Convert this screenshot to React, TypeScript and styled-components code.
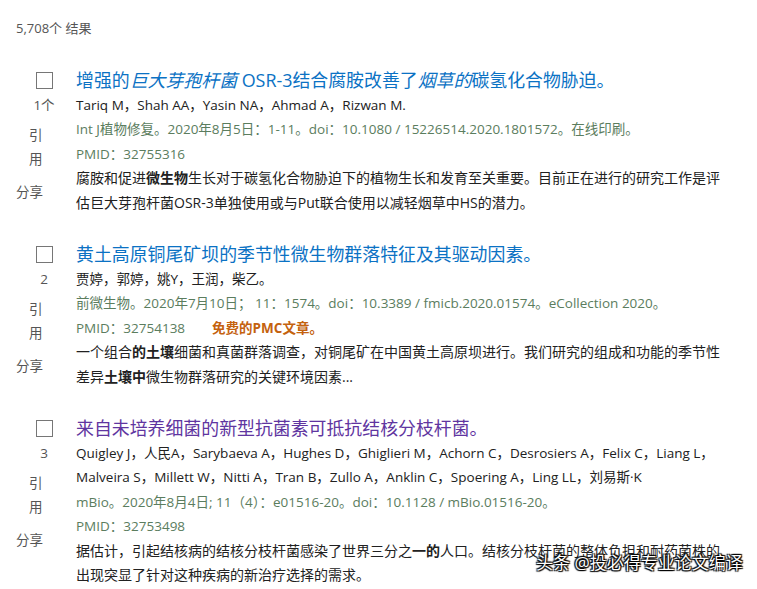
import React from "react";
import styled, { createGlobalStyle } from "styled-components";

const Global = createGlobalStyle`
  html, body { margin: 0; padding: 0; background: #fff; }
  body { font-family: "Segoe UI", "Open Sans", "Noto Sans CJK SC", sans-serif; color: #212121; }
`;

const Page = styled.div`
  position: relative;
  width: 757px;
  height: 589px;
  overflow: hidden;
  padding: 18px 0 0 16px;
  box-sizing: border-box;
`;

const Count = styled.div`
  font-size: 13px;
  line-height: 20px;
  color: #555;
`;

const List = styled.div`
  margin-top: 30px;
  display: flex;
  flex-direction: column;
  gap: 27px;
`;

const Item = styled.div`
  display: flex;
  align-items: flex-start;
`;

const Side = styled.div`
  width: 56px;
  margin-right: 4px;
  display: flex;
  flex-direction: column;
  align-items: center;
  color: #555;
  font-size: 13.5px;
`;

const Box = styled.div`
  width: 15px;
  height: 15px;
  border: 1.5px solid #767676;
  margin-top: 4px;
`;

const Cites = styled.div`
  margin-top: 4px;
  line-height: 24px;
`;

const CiteBtn = styled.div`
  align-self: flex-start;
  margin: 6px 0 0 13px;
  width: 14px;
  line-height: 24px;
  word-break: break-all;
`;

const ShareBtn = styled.div`
  align-self: flex-start;
  margin-top: 9px;
  line-height: 24px;
`;

const Body = styled.div`
  display: flex;
  flex-direction: column;
  white-space: nowrap;
`;

const Title = styled.a<{ $visited?: boolean }>`
  font-size: 17.9px;
  line-height: 25px;
  color: ${(p) => (p.$visited ? "#6035a0" : "#0b72c4")};
  text-decoration: none;
  i { font-style: italic; }
`;

const Line = styled.div<{ $tone?: "meta" | "text" | "author" }>`
  font-size: ${(p) => (p.$tone === "text" ? "14px" : "13.5px")};
  line-height: 24.4px;
  color: ${(p) => (p.$tone === "meta" ? "#5b7d5e" : "#212121")};
  b { font-weight: 700; }
`;

const Free = styled.span`
  margin-left: 27px;
  color: #c4620f;
  font-weight: 700;
`;

const Watermark = styled.div`
  position: absolute;
  left: 536px;
  top: 551px;
  font-size: 17px;
  line-height: 24px;
  color: #fff;
  white-space: nowrap;
  text-shadow: 0 0 1px #000, 1px 1px 1px #000, -1px -1px 1px #000, 1px -1px 1px #000, -1px 1px 1px #000;
`;

type Entry = {
  n: string;
  title: React.ReactNode;
  visited?: boolean;
  authors: string[];
  meta: string;
  pmid: string;
  free?: boolean;
  text: React.ReactNode[];
};

const entries: Entry[] = [
  {
    n: "1个",
    title: (
      <>
        增强的<i>巨大芽孢杆菌</i> OSR-3结合腐胺改善了<i>烟草的</i>碳氢化合物胁迫。
      </>
    ),
    authors: ["Tariq M，Shah AA，Yasin NA，Ahmad A，Rizwan M."],
    meta: "Int J植物修复。2020年8月5日：1-11。doi：10.1080 / 15226514.2020.1801572。在线印刷。",
    pmid: "PMID：32755316",
    text: [
      <>
        腐胺和促进<b>微生物</b>生长对于碳氢化合物胁迫下的植物生长和发育至关重要。目前正在进行的研究工作是评
      </>,
      <>估巨大芽孢杆菌OSR-3单独使用或与Put联合使用以减轻烟草中HS的潜力。</>,
    ],
  },
  {
    n: "2",
    title: <>黄土高原铜尾矿坝的季节性微生物群落特征及其驱动因素。</>,
    authors: ["贾婷，郭婷，姚Y，王润，柴乙。"],
    meta: "前微生物。2020年7月10日； 11：1574。doi：10.3389 / fmicb.2020.01574。eCollection 2020。",
    pmid: "PMID：32754138",
    free: true,
    text: [
      <>
        一个组合<b>的土壤</b>细菌和真菌群落调查，对铜尾矿在中国黄土高原坝进行。我们研究的组成和功能的季节性
      </>,
      <>
        差异<b>土壤中</b>微生物群落研究的关键环境因素...
      </>,
    ],
  },
  {
    n: "3",
    visited: true,
    title: <>来自未培养细菌的新型抗菌素可抵抗结核分枝杆菌。</>,
    authors: [
      "Quigley J，人民A，Sarybaeva A，Hughes D，Ghiglieri M，Achorn C，Desrosiers A，Felix C，Liang L，",
      "Malveira S，Millett W，Nitti A，Tran B，Zullo A，Anklin C，Spoering A，Ling LL，刘易斯·K",
    ],
    meta: "mBio。2020年8月4日; 11（4）：e01516-20。doi：10.1128 / mBio.01516-20。",
    pmid: "PMID：32753498",
    text: [
      <>
        据估计，引起结核病的结核分枝杆菌感染了世界三分之<b>一的</b>人口。结核分枝杆菌的整体负担和耐药菌株的
      </>,
      <>出现突显了针对这种疾病的新治疗选择的需求。</>,
    ],
  },
];

export default function App() {
  return (
    <>
      <Global />
      <Page>
        <Count>5,708个 结果</Count>
        <List>
          {entries.map((e) => (
            <Item key={e.pmid}>
              <Side>
                <Box />
                <Cites>{e.n}</Cites>
                <CiteBtn>引用</CiteBtn>
                <ShareBtn>分享</ShareBtn>
              </Side>
              <Body>
                <Title href="#" $visited={e.visited}>
                  {e.title}
                </Title>
                {e.authors.map((a, i) => (
                  <Line key={i} $tone="author">
                    {a}
                  </Line>
                ))}
                <Line $tone="meta">{e.meta}</Line>
                <Line $tone="meta">
                  {e.pmid}
                  {e.free && <Free>免费的PMC文章。</Free>}
                </Line>
                {e.text.map((t, i) => (
                  <Line key={"t" + i} $tone="text">
                    {t}
                  </Line>
                ))}
              </Body>
            </Item>
          ))}
        </List>
        <Watermark>头条 @投必得专业论文编译</Watermark>
      </Page>
    </>
  );
}
